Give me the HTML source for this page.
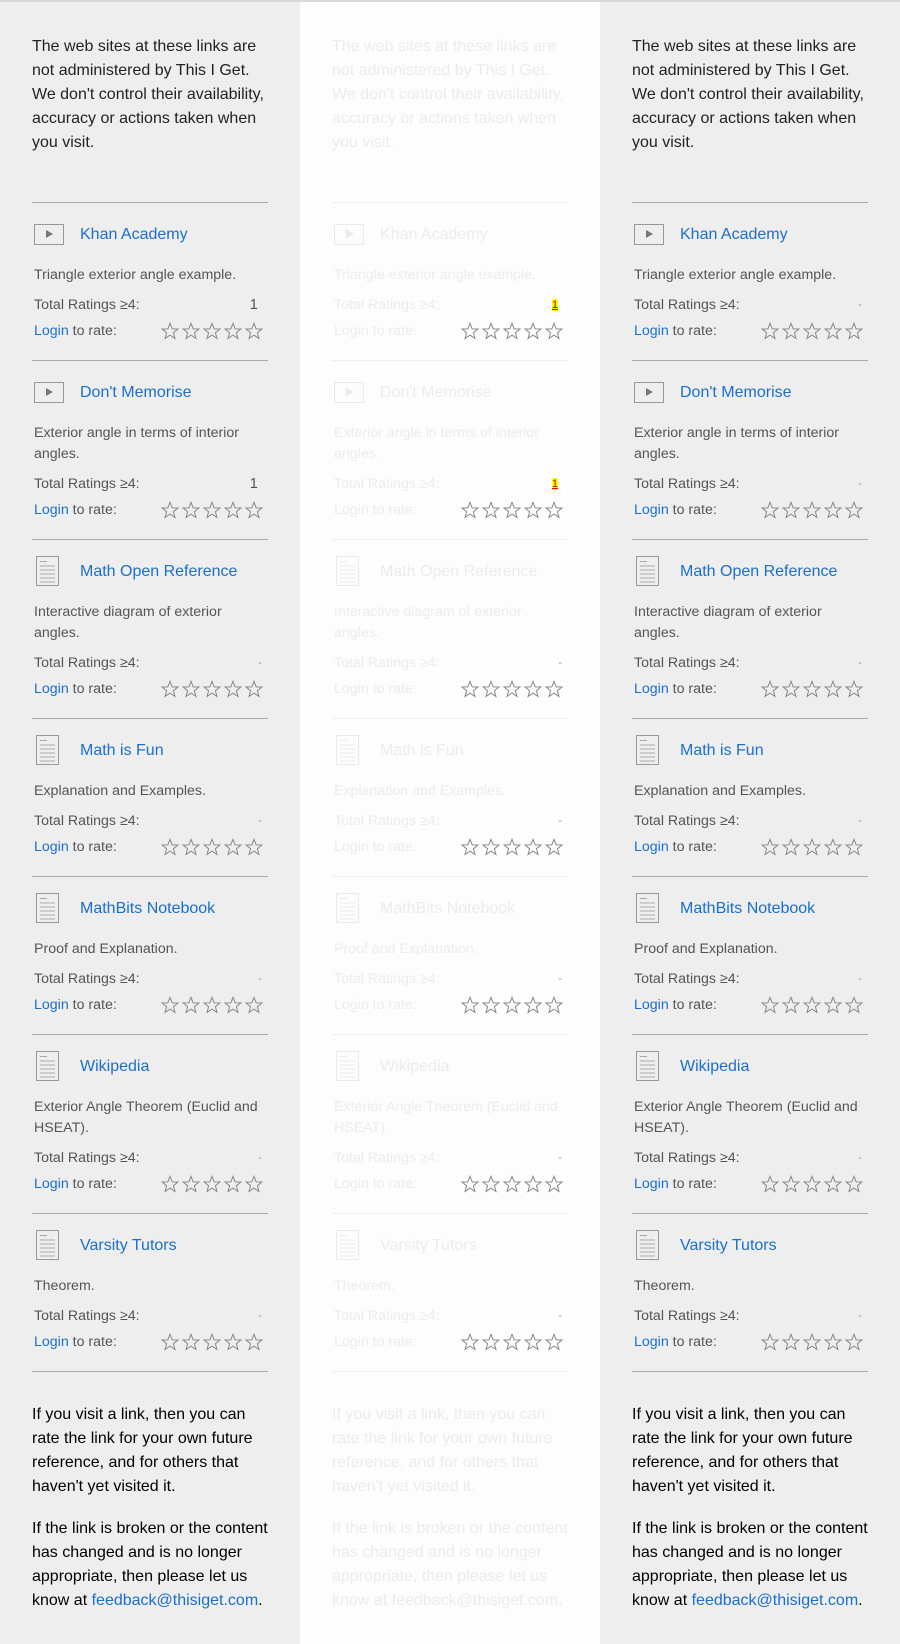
<!DOCTYPE html>
<html><head><meta charset="utf-8"><style>
*{margin:0;padding:0;box-sizing:border-box}
body{width:900px;height:1644px;overflow:hidden;font-family:"Liberation Sans",Arial,sans-serif;background:#eee;border-top:2px solid #d8d8d8}
.col{position:absolute;top:2px;width:300px;height:1642px;padding:0 30px 0 32px;color:#222}
.c1{left:0;background:#eee}.c2{left:300px;background:#fdfdfd}.c3{left:600px;background:#eee}
.intro{margin-top:33px;font-size:16px;line-height:24px;height:167px}
.item{border-top:1px solid #aaa;height:158px;position:relative;width:236px}
.item.two{height:179px}
.hd{position:absolute;top:20px;left:0;height:24px;width:240px}
.hd a{position:absolute;left:48px;top:0;font-size:16px;line-height:24px;color:#1a6fd0;text-decoration:none;white-space:nowrap}
.hd svg{position:absolute;left:2px}
.desc{position:absolute;top:62px;left:2px;font-size:14.2px;line-height:21px;color:#555;width:232px}
.r1,.r2{position:absolute;left:2px;width:234px;font-size:14.2px;line-height:24px;color:#555}
.r1{top:90px}.r2{top:116px}
.two .r1{top:111px}.two .r2{top:137px}
.r1 .v{position:absolute;right:10px;top:0;font-size:15px}
.r1 .d{position:absolute;right:6px;top:0;color:#999;font-size:11px}
.r2 a{color:#1a6fd0;text-decoration:none}
.stars{position:absolute;right:5px;top:3px;display:flex}
.stars svg{display:block;margin-left:3px}
.foot{position:absolute;top:1371px;left:32px;width:236px;border-top:1px solid #aaa;font-size:16px;line-height:24px}
.foot p{display:block;width:242px}
.foot .p1{margin-top:31px}
.foot .p2{margin-top:18px}
.foot a{color:#1a6fd0;text-decoration:none}
.c2 .intro,.c2 .desc,.c2 .r1,.c2 .r2,.c2 .hd a,.c2 .r2 a{color:#ececec}
.c2 .item{border-color:#f0f0f0}
.c2 .hd svg *{stroke:#eaeaea}.c2 .hd svg .f{fill:#eaeaea}
.c2 .stars *{stroke:#ececec}
.c2 .v{color:#b00;background:#ff0;font-size:11px;text-decoration:underline;text-decoration-color:red;line-height:12px;top:6px}
</style></head><body>
<svg width="0" height="0" style="position:absolute"><defs>
<symbol id="st" viewBox="0 0 20 20"><polygon points="10,1.5 12.4,7.6 18.8,7.8 13.8,11.9 15.5,18.3 10,14.6 4.5,18.3 6.2,11.9 1.2,7.8 7.6,7.6" fill="none" stroke="#888" stroke-width="1.1"/></symbol>
</defs></svg>
<script>
const items=[
["v","Khan Academy","Triangle exterior angle example.",0,"1"],
["v","Don't Memorise","Exterior angle in terms of interior angles.",1,"1"],
["d","Math Open Reference","Interactive diagram of exterior angles.",1,""],
["d","Math is Fun","Explanation and Examples.",0,""],
["d","MathBits Notebook","Proof and Explanation.",0,""],
["d","Wikipedia","Exterior Angle Theorem (Euclid and HSEAT).",1,""],
["d","Varsity Tutors","Theorem.",0,""]];
const vid='<svg width="32" height="22" style="top:1px"><rect x="0.5" y="0.5" width="29" height="20" fill="none" stroke="#999"/><polygon class="f" points="12,6 12,14 19,10" fill="#777"/></svg>';
const doc='<svg width="24" height="32" style="top:-4px;left:4px"><rect x="0.5" y="0.5" width="22" height="29" fill="none" stroke="#999"/><g stroke="#aaa"><line x1="4" y1="5.5" x2="11" y2="5.5"/><line x1="4" y1="10" x2="19" y2="10"/><line x1="4" y1="14" x2="19" y2="14"/><line x1="4" y1="18" x2="19" y2="18"/><line x1="4" y1="22" x2="19" y2="22"/><line x1="4" y1="26" x2="19" y2="26"/></g></svg>';
let stars='<span class="stars">';for(let i=0;i<5;i++)stars+='<svg width="18" height="18"><use href="#st"/></svg>';stars+='</span>';
function col(c){let h='<div class="col '+c+'"><div class="intro">The web sites at these links are not administered by This I Get. We don\'t control their availability, accuracy or actions taken when you visit.</div>';
for(const it of items){h+='<div class="item'+(it[3]?' two':'')+'"><div class="hd">'+(it[0]=="v"?vid:doc)+'<a>'+it[1]+'</a></div><div class="desc">'+it[2]+'</div><div class="r1">Total Ratings ≥4:'+(c!='c3'&&it[4]?'<span class="v">'+it[4]+'</span>':'<span class="d">-</span>')+'</div><div class="r2"><a>Login</a> to rate:'+stars+'</div></div>';}
h+='<div class="item" style="height:0"></div></div>';return h;}
document.write(col('c1')+col('c2')+col('c3'));
function foot(l,faded){const s=faded?' style="color:#ececec"':'';return '<div class="foot" style="left:'+l+'px;'+(faded?'color:#ececec;border-color:#f0f0f0':'')+'"><p class="p1">If you visit a link, then you can rate the link for your own future reference, and for others that haven\'t yet visited it.</p><p class="p2">If the link is broken or the content has changed and is no longer appropriate, then please let us know at <a'+s+'>feedback@thisiget.com</a>.</p></div>';}
document.write(foot(32,0)+foot(332,1)+foot(632,0));
</script>
</body></html>
